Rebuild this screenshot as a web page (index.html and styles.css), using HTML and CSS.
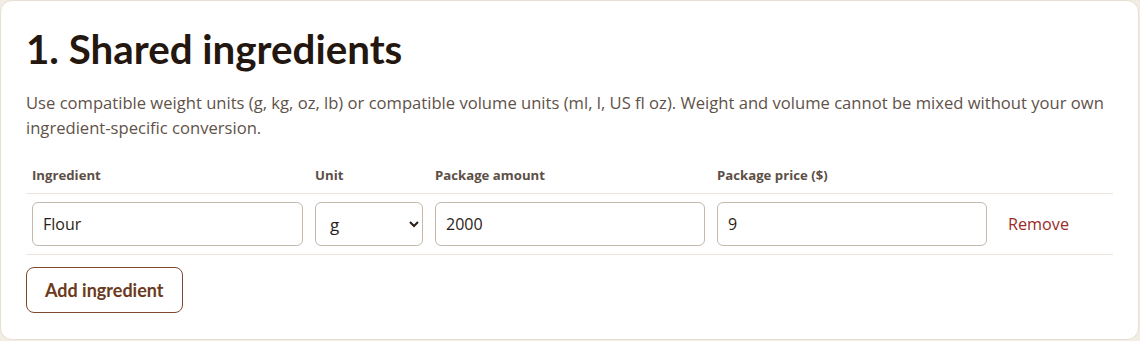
FILE: index.html
```html
<!DOCTYPE html>
<html lang="en">
<head>
<meta charset="utf-8">
<title>Shared ingredients</title>
<link rel="stylesheet" href="styles.css">
</head>
<body>
<section class="card">
  <h1 class="title">1. Shared ingredients</h1>
  <p class="intro">Use compatible weight units (g, kg, oz, lb) or compatible volume units (ml, l, US fl oz). Weight and volume cannot be mixed without your own ingredient-specific conversion.</p>
  <div class="table">
    <div class="row head">
      <div class="cell">Ingredient</div>
      <div class="cell">Unit</div>
      <div class="cell">Package amount</div>
      <div class="cell">Package price ($)</div>
      <div class="cell"></div>
    </div>
    <div class="row body">
      <div class="cell"><input class="field" type="text" value="Flour"></div>
      <div class="cell">
        <select class="field select">
          <option selected>g</option>
          <option>kg</option>
          <option>oz</option>
          <option>lb</option>
          <option>ml</option>
          <option>l</option>
          <option>US fl oz</option>
        </select>
      </div>
      <div class="cell"><input class="field" type="text" value="2000"></div>
      <div class="cell"><input class="field" type="text" value="9"></div>
      <div class="cell"><button class="remove" type="button">Remove</button></div>
    </div>
  </div>
  <button class="add" type="button">Add ingredient</button>
</section>
</body>
</html>
```
FILE: styles.css
```css
html, body {
  margin: 0;
  padding: 0;
}
body {
  background: #f1ece4;
  font-family: "Open Sans", "Noto Sans", sans-serif;
  color: #2a1d17;
}
.card {
  box-sizing: border-box;
  width: 1139px;
  background: #ffffff;
  border: 1px solid #e7dfd3;
  border-radius: 12px;
  padding: 24px 25px 26px;
}
.title {
  margin: 0;
  font-family: Lato, "Open Sans", sans-serif;
  font-size: 40.3px;
  line-height: 48px;
  font-weight: 700;
  color: #24170f;
}
.intro {
  margin: 17px 0 0;
  font-size: 16.6px;
  line-height: 25px;
  color: #5f5249;
}
.table {
  margin-top: 18px;
}
.row {
  display: grid;
  grid-template-columns: 283px 120px 282px 282px 1fr;
  border-bottom: 1px solid #ece5dc;
}
.cell {
  padding: 8px 6px;
  display: flex;
  align-items: center;
}
.head .cell {
  padding: 8px 6px 9px;
  font-size: 13.2px;
  line-height: 18px;
  font-weight: 700;
  color: #5c4f46;
}
.field {
  box-sizing: border-box;
  width: 100%;
  height: 44px;
  border: 1px solid #c5b9ae;
  border-radius: 6px;
  padding: 0 10px;
  font-family: inherit;
  font-size: 16px;
  color: #2a1d17;
  background: #ffffff;
}
.select {
  padding: 0 8px 0 10px;
  font-size: 17px;
}
.remove {
  border: 0;
  background: none;
  padding: 0 9px;
  font-family: inherit;
  font-size: 16.2px;
  color: #9a2b27;
  cursor: pointer;
}
.add {
  margin-top: 12px;
  height: 46px;
  padding: 0 18px;
  border: 1px solid #7b4a2e;
  border-radius: 8px;
  background: #ffffff;
  font-family: Lato, "Open Sans", sans-serif;
  font-size: 18px;
  font-weight: 700;
  color: #6b3a1e;
  cursor: pointer;
}
```
